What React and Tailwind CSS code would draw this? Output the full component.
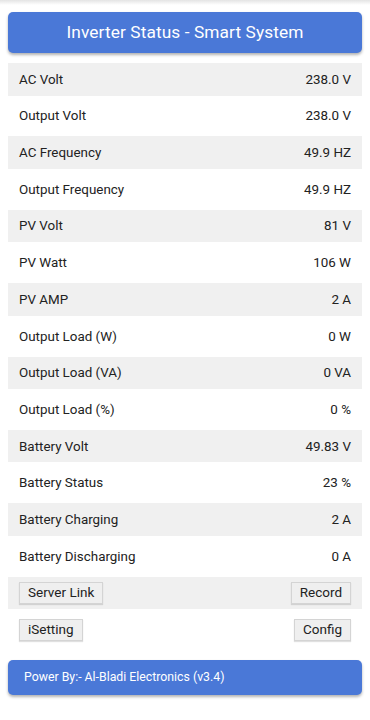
import { useState } from 'react'

function App() {
  const rows = [
    { label: 'AC Volt', value: '238.0 V' },
    { label: 'Output Volt', value: '238.0 V' },
    { label: 'AC Frequency', value: '49.9 HZ' },
    { label: 'Output Frequency', value: '49.9 HZ' },
    { label: 'PV Volt', value: '81 V' },
    { label: 'PV Watt', value: '106 W' },
    { label: 'PV AMP', value: '2 A' },
    { label: 'Output Load (W)', value: '0 W' },
    { label: 'Output Load (VA)', value: '0 VA' },
    { label: 'Output Load (%)', value: '0 %' },
    { label: 'Battery Volt', value: '49.83 V' },
    { label: 'Battery Status', value: '23 %' },
    { label: 'Battery Charging', value: '2 A' },
    { label: 'Battery Discharging', value: '0 A' }
  ]

  const [buttons] = useState([
    ['Server Link', 'Record'],
    ['iSetting', 'Config']
  ])

  const btn = 'h-[22px] px-[8px] bg-[#efefef] border border-[#d4d4d4] text-[13.5px] text-[#222] leading-none flex items-center shadow-[0_1px_1px_rgba(0,0,0,0.12)]'

  return (
    <div className="min-h-screen bg-white font-['Roboto',sans-serif] relative">
      {/* top shade */}
      <div className="h-[5px] bg-gradient-to-b from-[#e4e4e4] to-white" />

      <div className="px-2 pt-[7px]">
        {/* Header */}
        <div className="h-[41px] bg-[#4a78d7] rounded-[5px] shadow-[0_2px_3px_rgba(0,0,0,0.3)] flex items-center justify-center">
          <h1 className="text-white text-[17.3px] tracking-[0.1px]">Inverter Status - Smart System</h1>
        </div>

        {/* Table */}
        <div className="mt-[10px] flex flex-col gap-[4.2px]">
          {rows.map((row, i) => (
            <div
              key={row.label}
              className={`h-[32.5px] px-[11px] pt-[1px] flex items-center justify-between text-[13.4px] text-[#222] ${i % 2 === 0 ? 'bg-[#f0f0f0]' : 'bg-white'}`}
            >
              <span>{row.label}</span>
              <span>{row.value}</span>
            </div>
          ))}
          {buttons.map((pair, i) => (
            <div
              key={pair[0]}
              className={`h-[32.5px] px-[11px] flex items-center justify-between ${i % 2 === 0 ? 'bg-[#f0f0f0]' : 'bg-white'}`}
            >
              <button className={btn}>{pair[0]}</button>
              <button className={btn}>{pair[1]}</button>
            </div>
          ))}
        </div>

        {/* Footer */}
        <div className="mt-[14px] h-[35px] bg-[#4a78d7] rounded-[5px] shadow-[0_2px_3px_rgba(0,0,0,0.3)] flex items-center px-4">
          <span className="text-white text-[12.3px]">Power By:- Al-Bladi Electronics (v3.4)</span>
        </div>
      </div>
    </div>
  )
}

export default App
